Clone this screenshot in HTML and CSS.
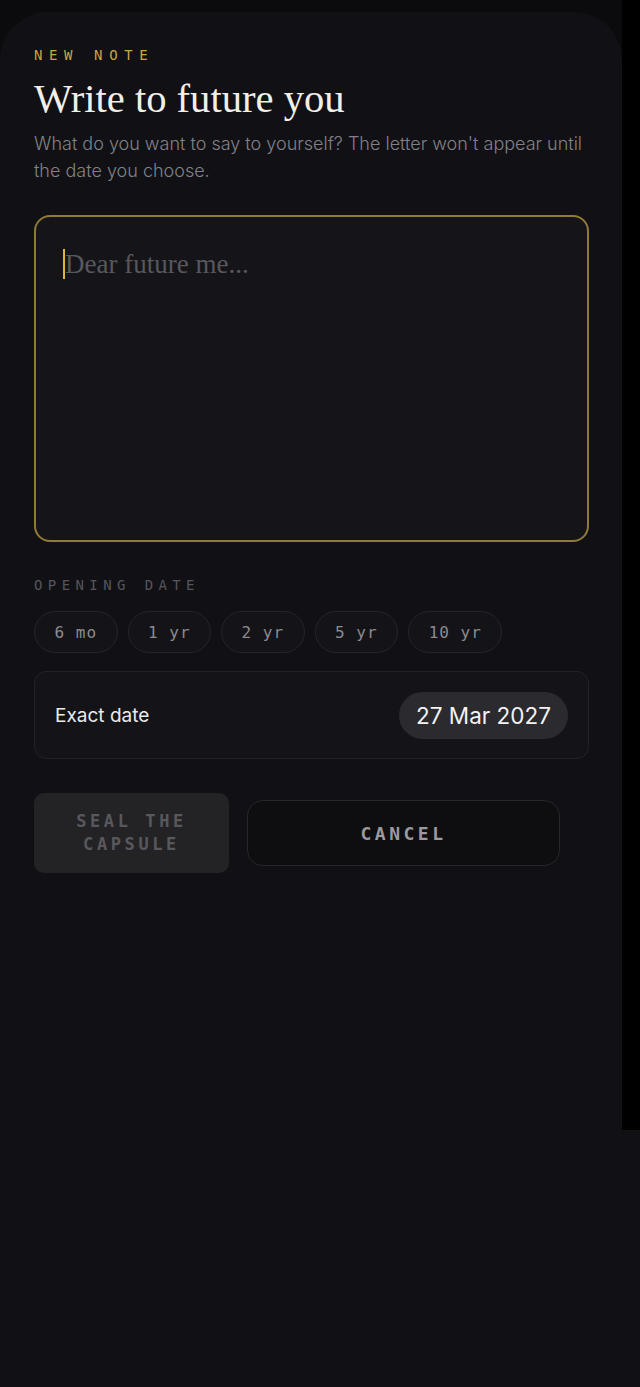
FILE: index.html
```html
<!DOCTYPE html>
<html lang="en">
<head>
<meta charset="utf-8">
<title>New note</title>
<link rel="stylesheet" href="styles.css">
</head>
<body>
<div class="frame">
  <div class="stage">
    <main class="sheet">
      <p class="eyebrow">NEW NOTE</p>
      <h1 class="title">Write to future you</h1>
      <p class="lead">What do you want to say to yourself? The letter won't appear until the date you choose.</p>

      <div class="editor">
        <div class="placeholder"><span class="caret"></span>Dear future me...</div>
      </div>

      <p class="label">OPENING DATE</p>
      <div class="chips">
        <button class="chip">6 mo</button>
        <button class="chip">1 yr</button>
        <button class="chip">2 yr</button>
        <button class="chip">5 yr</button>
        <button class="chip">10 yr</button>
      </div>

      <div class="exact">
        <span class="exact-label">Exact date</span>
        <span class="date-pill">27 Mar 2027</span>
      </div>

      <div class="actions">
        <button class="btn-seal">SEAL THE<br>CAPSULE</button>
        <button class="btn-cancel">CANCEL</button>
      </div>
    </main>
  </div>
  <div class="strip"></div>
</div>
</body>
</html>
```
FILE: styles.css
```css
* { box-sizing: border-box; }
html, body { margin: 0; padding: 0; }
body {
  background: #111115;
  height: 1387px;
  overflow: hidden;
  font-family: "Inter", "Noto Sans", sans-serif;
}
.frame {
  display: grid;
  grid-template-columns: 622px 1fr;
  align-items: start;
}
.stage {
  background: #0b0b0e;
  padding-top: 12px;
  height: 1387px;
}
.strip {
  background: #000;
  height: 1130px;
}
.sheet {
  background: #111115;
  border-radius: 48px 48px 0 0;
  height: 1375px;
  padding: 35px 34px 0 34px;
}
.eyebrow {
  margin: 0;
  font-family: "DejaVu Sans Mono", monospace;
  font-size: 14px;
  line-height: 16px;
  letter-spacing: 6.6px;
  color: #c9a443;
}
.title {
  margin: 13px 0 0;
  font-family: "Liberation Serif", serif;
  font-weight: 400;
  font-size: 40.6px;
  line-height: 46px;
  color: #f1efe9;
}
.lead {
  margin: 8px 0 0;
  font-size: 18px;
  line-height: 27px;
  font-weight: 300;
  color: #818187;
  max-width: 556px;
}
.editor {
  margin-top: 31px;
  height: 327px;
  width: 555px;
  border: 2px solid #8f7a36;
  border-radius: 16px;
  background: #151519;
  padding: 30px 27px;
}
.placeholder {
  display: flex;
  align-items: center;
  font-family: "Liberation Serif", serif;
  font-size: 27px;
  line-height: 34px;
  color: #57575c;
}
.caret {
  width: 2px;
  height: 30px;
  background: #e2b634;
}
.label {
  margin: 35px 0 0;
  font-family: "DejaVu Sans Mono", monospace;
  font-size: 14px;
  line-height: 16px;
  letter-spacing: 5.4px;
  color: #55555b;
}
.chips {
  display: flex;
  gap: 10px;
  margin-top: 18px;
}
.chip {
  height: 42px;
  padding: 0 19.5px;
  border-radius: 21px;
  border: 1px solid #24242a;
  background: #141418;
  font-family: "DejaVu Sans Mono", monospace;
  font-size: 16px;
  letter-spacing: 1px;
  color: #8b8b90;
}
.exact {
  margin-top: 18px;
  width: 555px;
  height: 88px;
  display: flex;
  align-items: center;
  justify-content: space-between;
  padding: 0 20px;
  background: #141418;
  border: 1px solid #222227;
  border-radius: 12px;
}
.exact-label {
  font-size: 19px;
  color: #e9e9ec;
}
.date-pill {
  height: 47px;
  display: flex;
  align-items: center;
  padding: 0 17px;
  border-radius: 24px;
  background: #2a2a2f;
  font-size: 22.5px;
  color: #f2f2f4;
}
.actions {
  margin-top: 34px;
  display: flex;
  align-items: center;
  gap: 18px;
}
.btn-seal {
  width: 195px;
  height: 80px;
  border: none;
  border-radius: 10px;
  background: #232326;
  font-family: "DejaVu Sans Mono", monospace;
  font-weight: 700;
  font-size: 17px;
  line-height: 23px;
  letter-spacing: 3.6px;
  color: #58585c;
}
.btn-cancel {
  width: 313px;
  height: 66px;
  border: 1px solid #26262b;
  border-radius: 16px;
  background: #0e0e11;
  font-family: "DejaVu Sans Mono", monospace;
  font-weight: 700;
  font-size: 18px;
  letter-spacing: 3.5px;
  color: #9a9a9f;
}
```
